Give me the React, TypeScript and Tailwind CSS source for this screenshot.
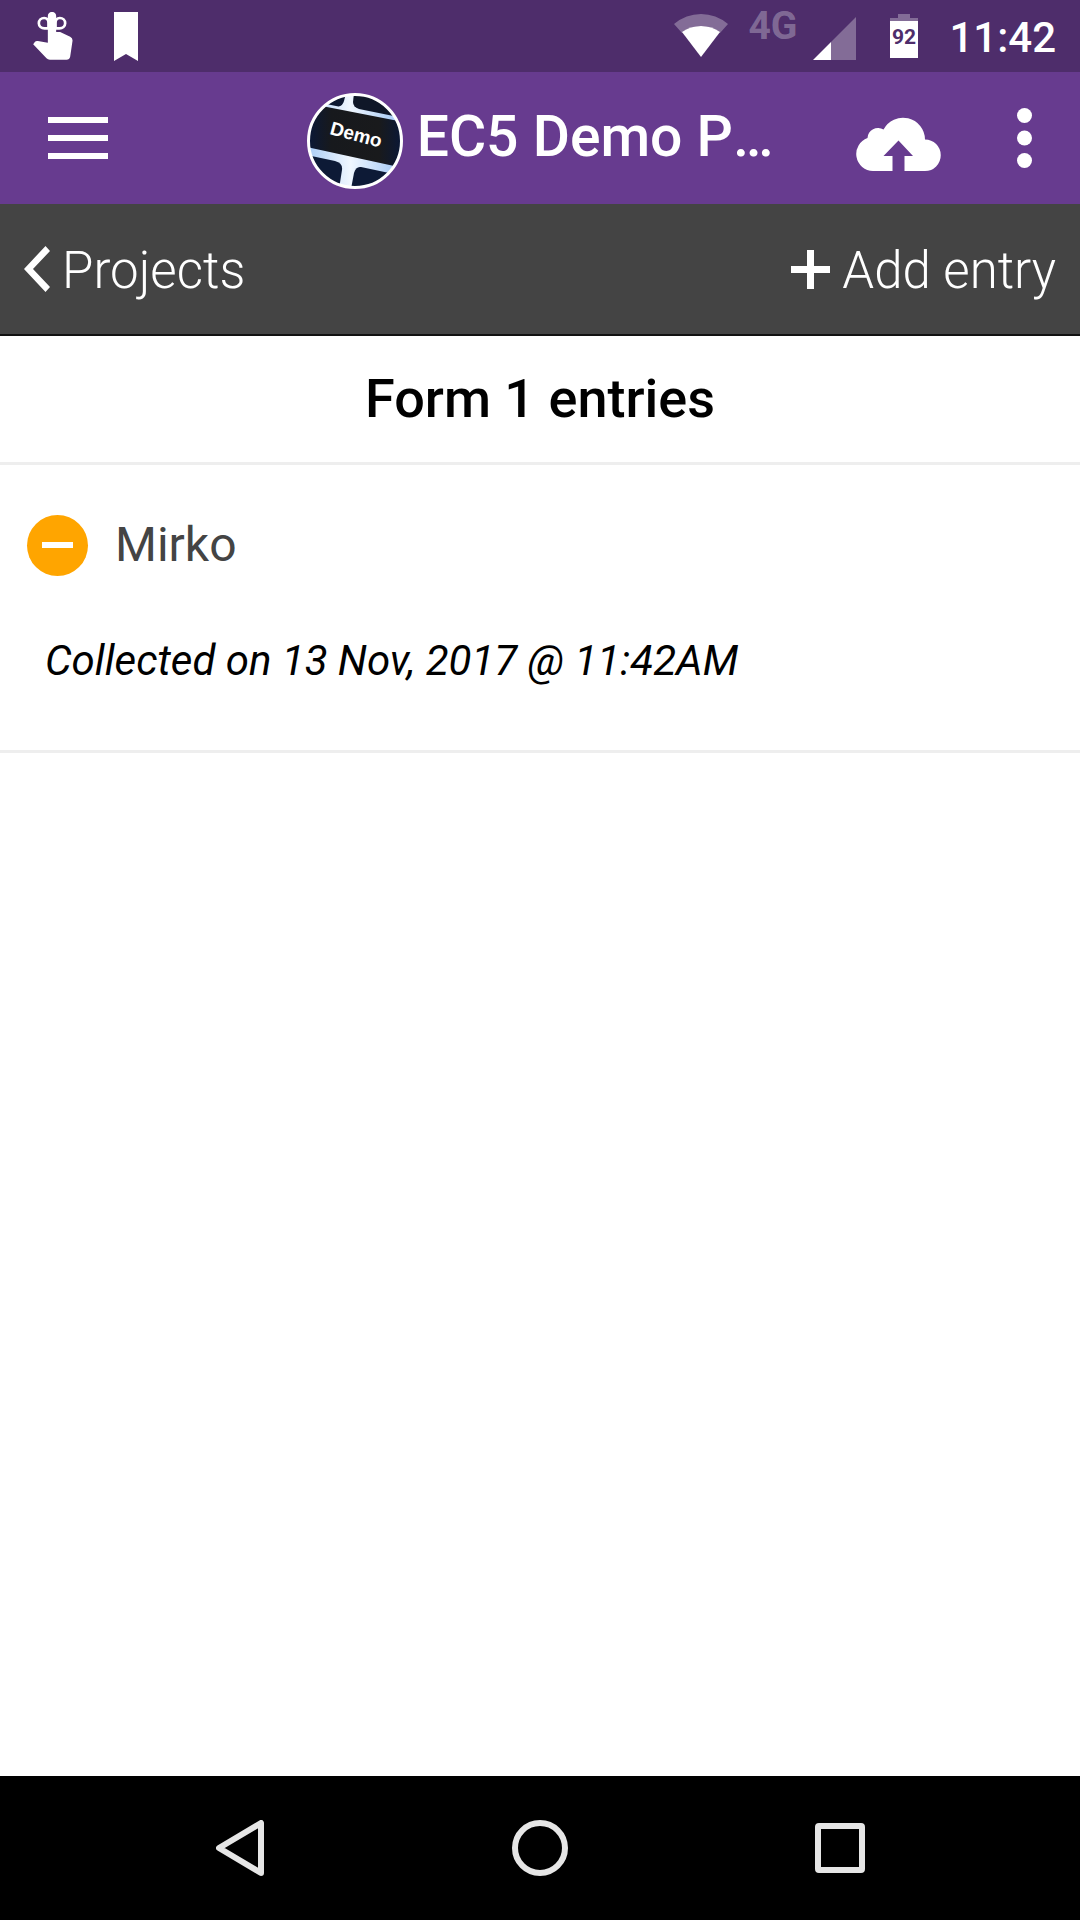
import React from "react";

function ReminderIcon() {
  return (
    <svg className="h-12 w-10" viewBox="99 36 119 144" fill="#fff" aria-hidden="true">
      <path d="M143 48a12 12 0 0 1 25 0v48h12l30 14q8 4 7 13l-7 47q-2 9-11 9h-50q-6 0-10-4L99 133l5-7q3-4 9-3l30 5z" />
      <g fill="none" stroke="#fff" strokeWidth="8">
        <path d="M155 85h-22c-9 0-17-6-17-15s7-16 16-16c8 0 13 6 13 15v14" />
        <path d="M155 85h23c9 0 17-6 17-15s-7-16-16-16c-8 0-13 6-13 15v14" />
      </g>
    </svg>
  );
}

function BookmarkIcon() {
  return (
    <svg className="h-[49px] w-6" viewBox="0 0 24 49" fill="#fff" aria-hidden="true">
      <path d="M0 0h24v49l-12-7-12 7z" />
    </svg>
  );
}

function WifiIcon() {
  return (
    <svg className="h-11 w-[54px]" viewBox="0 0 54 44" fill="#fff" aria-hidden="true">
      <path fillOpacity=".3" d="M0 10Q12 0 27 0t27 10l-8 9Q38 12 27 12T8 19z" />
      <path d="M8 18Q16 12 27 12t19 6L27 43z" />
    </svg>
  );
}

function SignalIcon() {
  return (
    <svg className="mt-1 h-[43px] w-[43px]" viewBox="0 0 43 43" fill="#fff" aria-hidden="true">
      <path fillOpacity=".3" d="M18 25 43 0v43H18z" />
      <path d="M0 43 18 25v18z" />
    </svg>
  );
}

function BatteryIcon() {
  return (
    <svg className="h-11 w-7" viewBox="0 0 28 44" fill="#fff" role="img" aria-label="Battery 92%">
      <path fillOpacity=".3" d="M8 0h12v4h8v3H0V4h8z" />
      <path d="M0 7h28v37H0z" />
      <text x="14" y="30" textAnchor="middle" fontSize="21" className="fill-[#4e2d6b] font-bold">92</text>
    </svg>
  );
}

function ProjectLogo() {
  return (
    <svg className="mt-1.5 size-24 shrink-0" viewBox="0 0 96 96" role="img" aria-label="Demo project logo">
      <defs>
        <clipPath id="logo-disc"><circle cx="48" cy="48" r="46" /></clipPath>
        <linearGradient id="gap" x1="0" y1="0" x2="1" y2="0">
          <stop offset="0" stopColor="#a9ccf6" />
          <stop offset=".45" stopColor="#f0f7ff" />
          <stop offset="1" stopColor="#9cc4f5" />
        </linearGradient>
        <linearGradient id="key" x1="0" y1="0" x2="1" y2="0">
          <stop offset="0" stopColor="#0a1838" />
          <stop offset=".25" stopColor="#17191d" />
          <stop offset=".75" stopColor="#191a1c" />
          <stop offset="1" stopColor="#0a1838" />
        </linearGradient>
      </defs>
      <g clipPath="url(#logo-disc)">
        <rect width="96" height="96" fill="url(#gap)" />
        <path d="M0 0h39l-2 8q-2 7-8 5L0 7z" fill="#0c1830" />
        <path d="M47 0h49v25L52 16q-6-2-6-7z" fill="#0f1728" />
        <path d="M0 10l96 19v46L0 54z" fill="url(#key)" />
        <path d="M0 62l28 6q8 2 7 9l-3 19H0z" fill="#0d1a36" />
        <path d="M54 74l42 9v13H44l3-16q2-7 7-6z" fill="#0d1a36" />
        <text x="49" y="48" textAnchor="middle" fontSize="19" transform="rotate(15 49 42)" fill="#fff" className="font-['Liberation_Sans'] font-bold">Demo</text>
      </g>
      <circle cx="48" cy="48" r="46.5" fill="none" stroke="#fff" strokeWidth="3" />
    </svg>
  );
}

function CloudUploadIcon() {
  return (
    <svg className="mt-3 block h-[54px] w-[85px]" viewBox="0 0 85 54" fill="#fff" aria-hidden="true">
      <path d="M17 54A17 17 0 0 1 11.500 21 10.500 10.500 0 0 1 27.500 12.500 22 22 0 0 1 69 22.500 15.750 15.750 0 0 1 69 54H48.500V39H57L42.500 23.500 27.500 39H36.500V54z" />
    </svg>
  );
}

export default function App() {
  return (
    <div className="flex min-h-screen flex-col bg-white font-[Roboto,sans-serif] text-black">
      <div className="flex h-[72px] items-center justify-between bg-[#4e2d6b] pr-6 pl-[33px] text-white">
        <div className="flex items-center gap-[41px]">
          <ReminderIcon />
          <BookmarkIcon />
        </div>
        <div className="flex items-center">
          <WifiIcon />
          <span className="ml-5 pb-5 text-[39px] leading-none font-bold text-white/30">4G</span>
          <span className="ml-4"><SignalIcon /></span>
          <span className="ml-[34px]"><BatteryIcon /></span>
          <time className="ml-[31px] pt-1 text-[42px] leading-none font-medium">11:42</time>
        </div>
      </div>

      <header className="grid h-[132px] grid-cols-[1fr_auto_1fr] items-center bg-[#673b8f] px-12 text-white">
        <button type="button" aria-label="Menu" className="flex w-15 flex-col gap-3">
          <span className="h-1.5 bg-white" />
          <span className="h-1.5 bg-white" />
          <span className="h-1.5 bg-white" />
        </button>
        <div className="flex items-center gap-3.5">
          <ProjectLogo />
          <h1 className="pb-1 text-[57px] leading-none font-medium [font-kerning:none]">EC5 Demo P…</h1>
        </div>
        <div className="flex items-center justify-end gap-19">
          <button type="button" aria-label="Upload entries"><CloudUploadIcon /></button>
          <button type="button" aria-label="More options">
            <svg className="h-15 w-[15px]" viewBox="0 0 15 60" fill="#fff" aria-hidden="true">
              <circle cx="7.500" cy="7.500" r="7.500" />
              <circle cx="7.500" cy="30" r="7.500" />
              <circle cx="7.500" cy="52.500" r="7.500" />
            </svg>
          </button>
        </div>
      </header>

      <nav aria-label="Project" className="flex h-[132px] items-center justify-between border-b-2 border-[#111] bg-[#444] px-6 text-[51px] font-light text-white">
        <a href="#projects" className="flex items-center gap-3">
          <svg className="h-[46px] w-[26px]" viewBox="0 0 26 46" fill="#fff" aria-hidden="true">
            <path d="M21.500 0 26 5 9 23l17 18-4.500 5L0 23z" />
          </svg>
          <span className="pt-1">Projects</span>
        </a>
        <button type="button" className="flex items-center gap-3">
          <svg className="size-[39px]" viewBox="0 0 39 39" fill="#fff" aria-hidden="true">
            <path d="M16 0h7v16h16v7H23v16h-7V23H0v-7h16z" />
          </svg>
          <span className="pt-1">Add entry</span>
        </button>
      </nav>

      <main className="flex-1">
        <h2 className="flex h-[129px] items-center justify-center border-b-3 border-[#eee] pb-0.5 text-[54px] font-medium">Form 1 entries</h2>
        <article className="border-b-3 border-[#eee] pt-[46px] pb-[59px]">
          <div className="flex h-[68px] items-center gap-[27px] pl-[27px]">
            <span className="flex size-[61px] items-center justify-center rounded-full bg-[#ffa500]">
              <span className="h-1.5 w-[31px] bg-white" />
            </span>
            <h3 className="text-[48px] text-[#444]">Mirko</h3>
          </div>
          <p className="mt-[52px] pl-[45px] text-[42px] leading-[60px] italic">Collected on 13 Nov, 2017 @ 11:42AM</p>
        </article>
      </main>

      <footer className="grid h-36 grid-cols-3 place-items-center bg-black px-[90px]">
        <button type="button" aria-label="Back">
          <svg className="h-14 w-12" viewBox="0 0 48 56" fill="none" stroke="#e6e6e6" strokeWidth="6" strokeLinejoin="round" aria-hidden="true">
            <path d="M45 3v50L3 28z" />
          </svg>
        </button>
        <button type="button" aria-label="Home" className="size-14 rounded-full border-6 border-[#e6e6e6]" />
        <button type="button" aria-label="Recent apps" className="size-[50px] rounded-sm border-6 border-[#e6e6e6]" />
      </footer>
    </div>
  );
}
